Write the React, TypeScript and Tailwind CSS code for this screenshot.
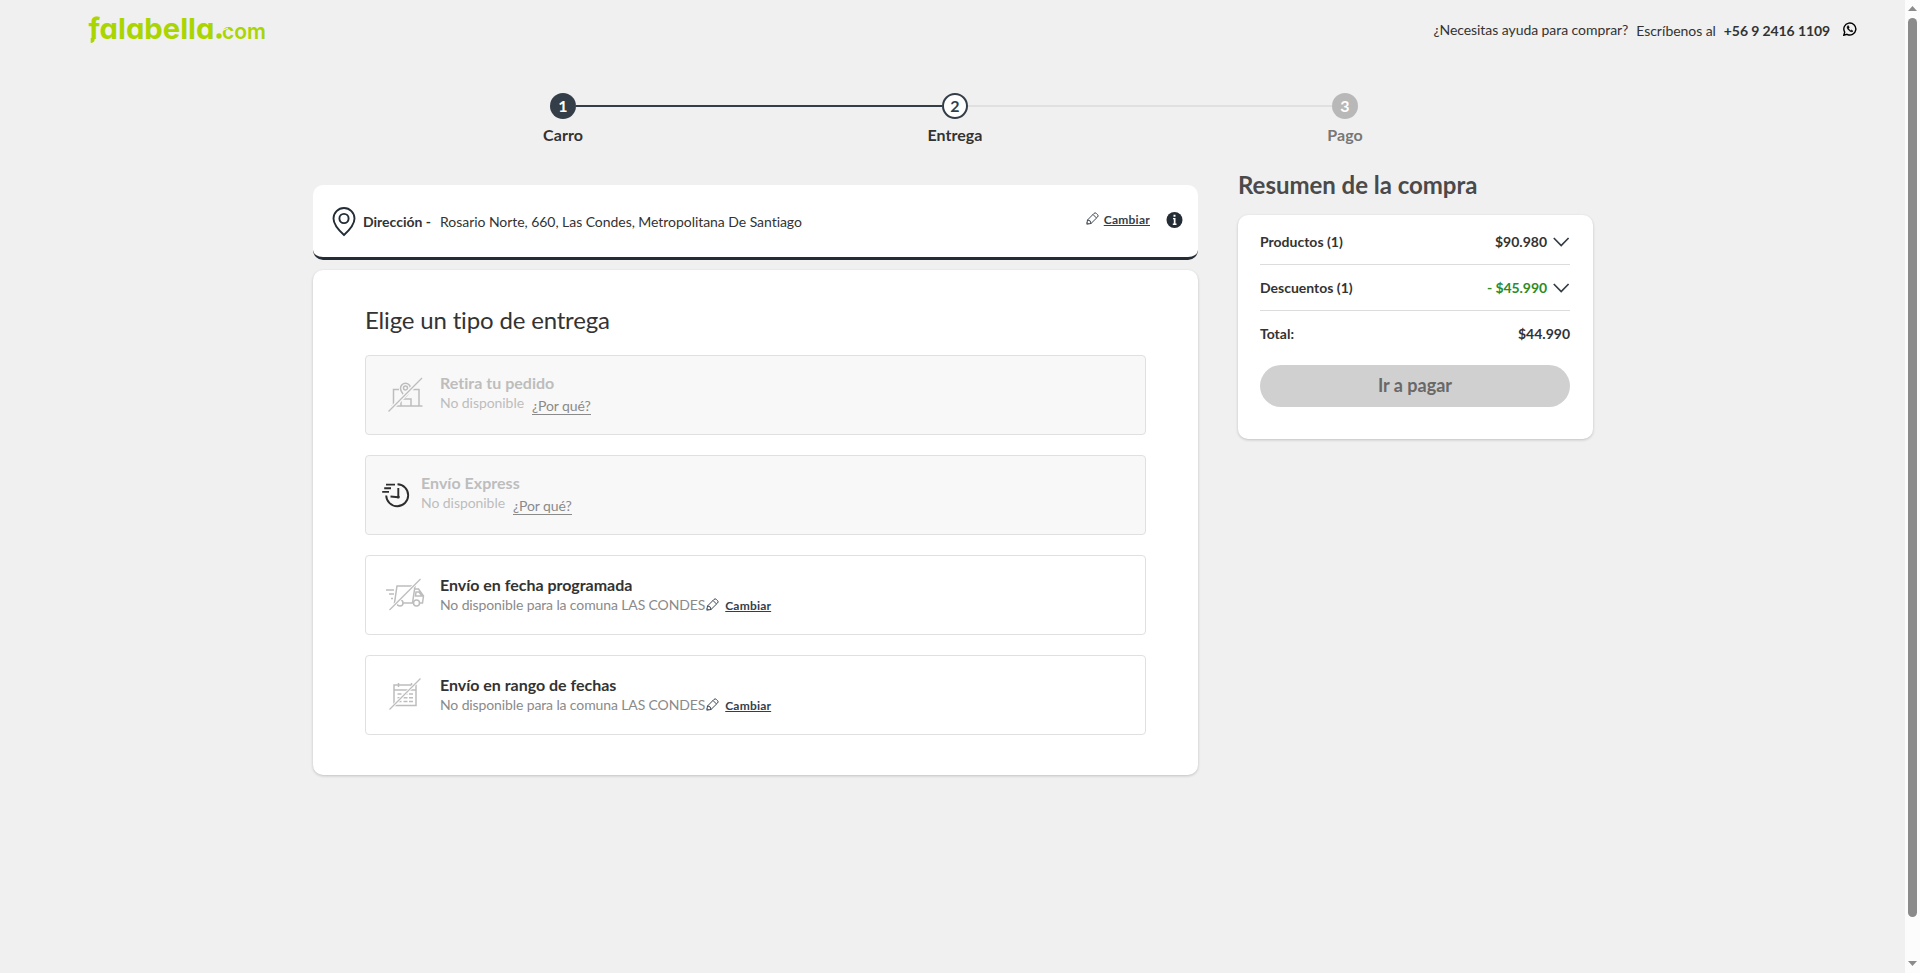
import type { ReactNode } from "react";

const Pencil = ({ className }: { className?: string }) => (
  <svg className={className} width="13" height="13" viewBox="0 0 13 13" fill="none" stroke="#343e49" strokeWidth="0.95" strokeLinejoin="round">
    <path d="M.8 12.200 1.500 8 8 1.400Q9.200.3 10.300 1.400L11.600 2.700Q12.700 3.800 11.600 5L5 11.500ZM7 2.500 10.500 6M1.500 8Q5 8 5 11.500M1 10.500 2.500 12" />
  </svg>
);

const Chevron = () => (
  <svg width="17" height="10" viewBox="0 0 17 10" fill="none" stroke="#333b44" strokeWidth="1.7">
    <path d="M.8 1 8.200 8.600 15.600 1" />
  </svg>
);

const StoreIcon = () => (
  <svg width="36" height="36" viewBox="0 0 36 36" fill="none" stroke="#bdbdbd" strokeWidth="1.5">
    <path d="M11 12.500H5.500V29M3.500 29H34.500M25 12.500H31V29M13 29V22H23V29" />
    <path d="M17.500 20Q12.500 14.500 12.500 11.200A5 5 0 0 1 22.500 11.200Q22.500 14.500 17.500 20Z" />
    <circle cx="17.500" cy="11" r="2" />
    <path d="M.5 34.500 34 1" stroke="#f8f8f8" strokeWidth="4" />
    <path d="M.5 34.500 34 1" strokeWidth="1.200" />
  </svg>
);

const ClockIcon = () => (
  <svg width="28" height="26" viewBox="0 0 28 26" fill="none" stroke="#2d2d2d" strokeWidth="1.9">
    <path d="M15.500 2.200A11 11 0 1 1 4.200 13.500M4 2.600H13M2.200 6.200H9M.2 9.900H7M16.300 6V14.800" />
    <path d="M8.500 14.500 16.300 15.200" />
    <circle cx="16.300" cy="15.100" r="1.500" fill="#2d2d2d" stroke="none" />
  </svg>
);

const TruckIcon = () => (
  <svg width="39" height="33" viewBox="0 0 39 33" fill="none" stroke="#bdbdbd" strokeWidth="1.500">
    <path d="M0 12H8M3 16H8M5 20.500H7M11 25H8.500L11 8H29L26.500 25H17M27.800 11H32.500L37.500 18 36.500 25H33.500M30 14H33L36 18H29.500Z" />
    <circle cx="14" cy="25" r="3" />
    <circle cx="30.500" cy="25" r="3" />
    <path d="M3.500 32 34.500 1" stroke="#fff" strokeWidth="3" />
    <path d="M3.500 32 34.500 1" strokeWidth="1.200" />
  </svg>
);

const CalendarIcon = () => (
  <svg width="32" height="32" viewBox="0 0 32 32" fill="none" stroke="#bdbdbd" strokeWidth="1.500">
    <path d="M5 7H27V27.500H5ZM5 12H27M9.500 5V9M22.500 5V9" />
    <path d="M8.500 16H12.500M14.500 16H18.500M20 16H24M8.500 19.800H12.500M14.500 19.800H18.500M20 19.800H24M8.500 23.500H12.500M14.500 23.500H18.500M20 23.500H24" />
    <path d="M.5 31.500 31.500.5" stroke="#fff" strokeWidth="3" />
    <path d="M.5 31.500 31.500.5" strokeWidth="1.200" />
  </svg>
);

const Step = ({ n, label, circle, text }: { n: number; label: string; circle: string; text: string }) => (
  <div className="flex w-[26px] flex-col items-center">
    <div className={`flex h-[26px] w-[26px] shrink-0 items-center justify-center rounded-full text-[16px] font-bold leading-none ${circle}`}>{n}</div>
    <div className={`mt-[6px] whitespace-nowrap text-[16px] font-bold leading-5 tracking-[0.05px] ${text}`}>{label}</div>
  </div>
);

const Option = ({ icon, iconBox, title, disabled }: { icon: ReactNode; iconBox: string; title: string; disabled?: boolean }) => (
  <div className={`flex h-20 rounded border border-[#e0e0e0] ${disabled ? "bg-[#f8f8f8]" : "bg-white"}`}>
    <div className={`shrink-0 ${iconBox}`}>{icon}</div>
    {disabled ? (
      <div className="pt-[17px]">
        <div className="text-[16px] font-bold leading-5 tracking-[0.02px] text-[#bdbdbd]">{title}</div>
        <div className="flex text-[14px] leading-5 tracking-[-0.06px] text-[#bdbdbd]">
          <span>No disponible</span>
          <span className="ml-2 mt-[7px] h-[15px] border-b border-[#8a8a8a] leading-[11px] text-[#8a8a8a]">¿Por qué?</span>
        </div>
      </div>
    ) : (
      <div className="pt-[19px]">
        <div className="text-[16px] font-bold leading-5 tracking-[-0.02px] text-[#333]">{title}</div>
        <div className="flex text-[14px] leading-5 tracking-[-0.12px] text-[#8a8a8a]">
          <span>No disponible para la comuna LAS CONDES</span>
          <Pencil className="ml-[1px] mt-[3px]" />
          <span className="ml-[6px] text-[12px] font-bold leading-[21px] tracking-[0.2px] text-[#343e49] underline">Cambiar</span>
        </div>
      </div>
    )}
  </div>
);

const Row = ({ label, value, green, chevron }: { label: string; value: string; green?: boolean; chevron?: boolean }) => (
  <div className={`flex items-center justify-between text-[14px] font-bold ${chevron ? "h-[46px] border-b border-[#dcdcdc]" : "h-[45px]"}`}>
    <span>{label}</span>
    <span className="flex items-center gap-[6px]">
      <span className={green ? "tracking-[-0.07px] text-[#2c8c27]" : ""}>{value}</span>
      {chevron && <Chevron />}
    </span>
  </div>
);

export default function App() {
  return (
    <div className="flex h-[973px] overflow-hidden bg-[#f0f0f0] font-['Lato',sans-serif] text-[#333] [font-variant-ligatures:none]">
      <div className="flex w-[1905px] shrink-0 flex-col">
        <header className="flex h-[60px] items-start justify-between pl-[88px] pr-[48px]">
          <svg className="overflow-visible" width="180" height="48" viewBox="0 0 180 48" fill="#aad500">
            <g className="font-['Inter',sans-serif] [font-feature-settings:'cv11']">
              <text x="0.500" y="39" fontSize="29" fontWeight="700" textLength="126" lengthAdjust="spacingAndGlyphs">falabella</text>
              <text x="134" y="39" fontSize="22" fontWeight="600" textLength="44" lengthAdjust="spacingAndGlyphs">com</text>
            </g>
            <path d="M2.700 38H6.600V40Q6.200 42.600 2.700 43Z" />
            <circle cx="131" cy="36" r="2.700" />
            <path d="M132 31.500 140 28" stroke="#f0f0f0" strokeWidth="1.200" />
          </svg>
          <div className="flex pt-5 text-[14px] leading-5 tracking-[-0.06px]">
            <span>¿Necesitas ayuda para comprar?</span>
            <span className="ml-2 mt-px">Escríbenos al</span>
            <span className="ml-2 mt-px font-bold tracking-[-0.1px]">+56 9 2416 1109</span>
            <svg className="ml-[13px] mt-[2px]" width="14" height="14" viewBox="0 0 14 14" fill="none" stroke="#000">
              <path d="M.8 13.200 1.700 10.100A6 6 0 1 1 4 12.300Z" strokeWidth="1.400" />
              <path d="M4.700 3.800C3.500 5.400 4.200 6.600 5.500 8 7.500 10 8.700 10.200 10 9.200L8.700 8 7.800 8.700Q6.400 8 5.600 6.500L6.200 5.500 5.500 3.800Z" fill="#000" strokeWidth=".5" />
            </svg>
          </div>
        </header>

        <div className="ml-[550px] mt-[33px] flex h-[62px]">
          <Step n={1} label="Carro" circle="bg-[#343e49] text-white" text="text-[#333]" />
          <div className="mt-3 h-[2px] w-[366px] bg-[#343e49]" />
          <Step n={2} label="Entrega" circle="border-2 border-[#343e49] bg-white text-[#343e49]" text="text-[#333]" />
          <div className="mt-3 h-[2px] w-[364px] bg-[#e0e0e0]" />
          <Step n={3} label="Pago" circle="bg-[#b8b8b8] text-white" text="text-[#777]" />
        </div>

        <div className="flex pl-[313px]">
          <main className="mt-[30px] w-[885px]">
            <section className="flex h-[75px] rounded-[10px] border-b-[3px] border-[#242c35] bg-white pl-[19px] pr-[15px]">
              <svg className="mt-[22px]" width="24" height="30" viewBox="0 0 24 30" fill="none" stroke="#242c35" strokeWidth="1.900">
                <path d="M12 28Q1.500 18.500 1.500 11.500A10.500 10.500 0 0 1 22.500 11.500Q22.500 18.500 12 28Z" />
                <circle cx="12" cy="11.500" r="4.600" />
              </svg>
              <p className="ml-[7px] mt-[27px] flex text-[14px] leading-5">
                <span className="font-bold">Dirección -</span>
                <span className="ml-[9px] tracking-[-0.05px]">Rosario Norte, 660, Las Condes, Metropolitana De Santiago</span>
              </p>
              <div className="ml-auto flex pt-[25px] text-[12px] font-bold leading-5 text-[#343e49]">
                <Pencil className="mr-[5px] mt-[2px]" />
                <span className="tracking-[0.25px] underline">Cambiar</span>
                <svg className="ml-4 mt-[2px]" width="17" height="16" viewBox="0 0 16 16">
                  <circle cx="8" cy="8" r="8" fill="#242c35" />
                  <path d="M6.500 6H9V11.500H10V13H6.300V11.500H7.300V7.300H6.500ZM7 2.800H9V4.800H7Z" fill="#fff" />
                </svg>
              </div>
            </section>
            <section className="mt-[10px] h-[505px] rounded-[10px] bg-white px-[52px] pt-8 shadow-[0_1px_3px_rgba(0,0,0,0.2)]">
              <h2 className="h-[53px] text-[24px] leading-[36px] tracking-[-0.17px]">Elige un tipo de entrega</h2>
              <div className="flex flex-col gap-5">
                <Option disabled icon={<StoreIcon />} iconBox="w-[74px] pl-[22px] pt-[21px]" title="Retira tu pedido" />
                <Option disabled icon={<ClockIcon />} iconBox="w-[55px] pl-[16px] pt-[26px]" title="Envío Express" />
                <Option icon={<TruckIcon />} iconBox="w-[74px] pl-[20px] pt-[22px]" title="Envío en fecha programada" />
                <Option icon={<CalendarIcon />} iconBox="w-[74px] pl-[23px] pt-[22px]" title="Envío en rango de fechas" />
              </div>
            </section>
          </main>

          <aside className="ml-10 mt-[14px] w-[355px]">
            <h2 className="h-[46px] text-[24px] font-bold leading-[32px] tracking-[-0.03px] text-[#4a4a4a]">Resumen de la compra</h2>
            <section className="h-[224px] rounded-[10px] bg-white pl-[22px] pr-[23px] pt-1 shadow-[0_1px_3px_rgba(0,0,0,0.2)]">
              <Row label="Productos (1)" value="$90.980" chevron />
              <Row label="Descuentos (1)" value="- $45.990" green chevron />
              <Row label="Total:" value="$44.990" />
              <button className="mt-[9px] h-[42px] w-full rounded-full bg-[#d0d0d0] pb-[2px] text-[18px] font-bold text-[#686868]">Ir a pagar</button>
            </section>
          </aside>
        </div>
      </div>

      <div className="flex w-[15px] shrink-0 flex-col items-center bg-[#fcfcfc]">
        <svg className="mt-[6px]" width="9" height="5" viewBox="0 0 9 5" fill="#8b8b8b"><path d="M0 5 4.500 0 9 5Z" /></svg>
        <div className="mt-[7px] h-[899px] w-[9px] rounded-full bg-[#8b8b8b]" />
        <svg className="mt-11" width="9" height="5" viewBox="0 0 9 5" fill="#8b8b8b"><path d="M0 0 4.500 5 9 0Z" /></svg>
      </div>
    </div>
  );
}
